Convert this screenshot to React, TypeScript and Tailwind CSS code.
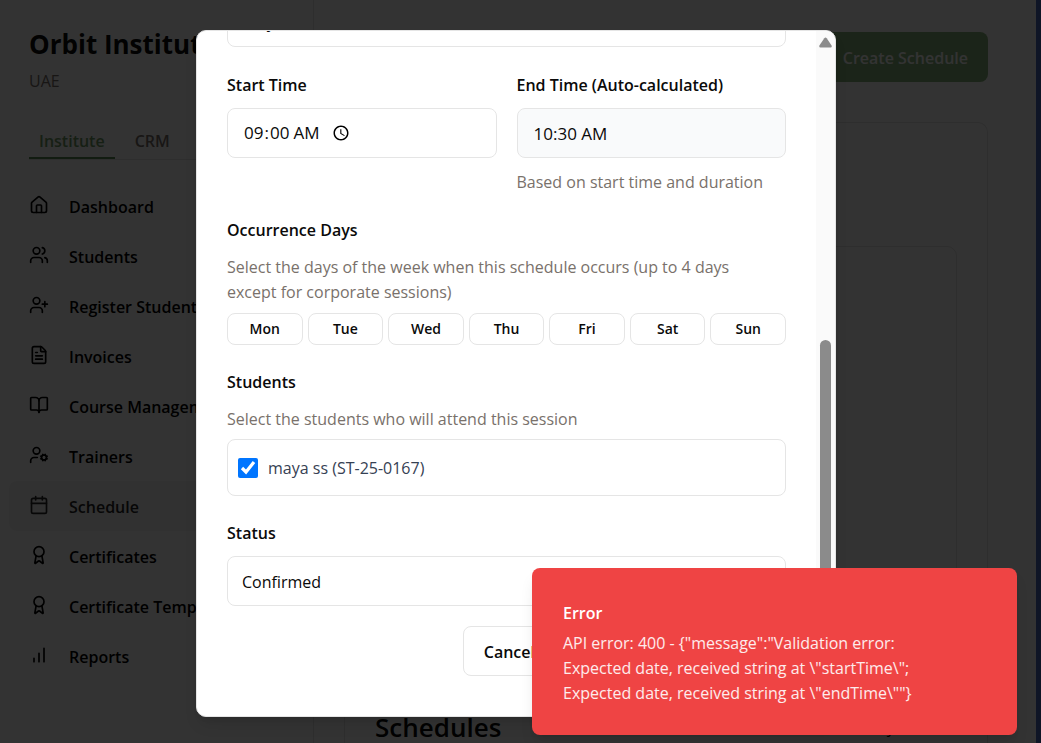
import React, { useState } from "react";
import {
  Award,
  BookOpen,
  Calendar,
  FileText,
  House,
  UserCog,
  UserPlus,
  Users,
} from "lucide-react";

function BarsIcon({ className }: { className?: string }) {
  return (
    <svg
      viewBox="0 0 24 24"
      fill="none"
      stroke="currentColor"
      strokeWidth={2}
      strokeLinecap="round"
      className={className}
      aria-hidden="true"
    >
      <path d="M6 20v-4M12 20V10M18 20V4" />
    </svg>
  );
}

const navItems = [
  { label: "Dashboard", icon: House },
  { label: "Students", icon: Users },
  { label: "Register Student", icon: UserPlus },
  { label: "Invoices", icon: FileText },
  { label: "Course Management", icon: BookOpen },
  { label: "Trainers", icon: UserCog },
  { label: "Schedule", icon: Calendar, active: true },
  { label: "Certificates", icon: Award },
  { label: "Certificate Templates", icon: Award },
  { label: "Reports", icon: BarsIcon },
];

const weekDays = ["Mon", "Tue", "Wed", "Thu", "Fri", "Sat", "Sun"];

function Sidebar() {
  return (
    <aside className="w-[314px] shrink-0 border-r border-neutral-200 px-[9px] pt-[26px]">
      <div className="px-5">
        <h1 className="text-[26px] leading-9 font-bold whitespace-nowrap">Orbit Institute</h1>
        <p className="mt-[6px] leading-[26px] text-stone-500">UAE</p>
        <div className="mt-[29px] flex border-b border-neutral-200 font-semibold">
          <button className="border-b-2 border-[#5c8a54] px-[10px] pt-[5px] pb-[2px] leading-[27px] text-[#6f9d66]">
            Institute
          </button>
          <button className="px-5 pt-[5px] pb-1 leading-[27px] text-stone-500">CRM</button>
        </div>
      </div>
      <nav className="mt-[21px]">
        {navItems.map(({ label, icon: Icon, active }) => (
          <a
            key={label}
            href="#"
            className={
              active
                ? "flex h-[50px] items-center gap-5 rounded-lg bg-neutral-100 px-5 pt-[2px] font-semibold whitespace-nowrap text-neutral-800"
                : "flex h-[50px] items-center gap-5 px-5 pt-[2px] font-semibold whitespace-nowrap text-black"
            }
          >
            <Icon className="mb-[5px] size-5 shrink-0" />
            {label}
          </a>
        ))}
      </nav>
    </aside>
  );
}

function SchedulePage() {
  return (
    <main className="flex min-w-0 flex-1 flex-col px-[30px] pt-8 pr-12">
      <button className="h-[50px] shrink-0 self-end rounded-lg bg-[#87b47d] px-5 pt-[2px] font-semibold text-white">
        Create Schedule
      </button>
      <section className="mt-10 flex-1 rounded-t-[10px] border border-b-0 border-neutral-200 px-[30px] pt-[123px]">
        <div className="h-[420px] rounded-[10px] border border-neutral-200" />
        <div className="mt-[43px] flex items-center justify-between">
          <h2 className="text-[26px] leading-9 font-semibold">Schedules</h2>
          <span className="pr-1">May 9, 2025</span>
        </div>
      </section>
    </main>
  );
}

function ScrollTrack() {
  return (
    <div className="flex w-[19px] shrink-0 flex-col items-center bg-neutral-50 py-[6px]" aria-hidden="true">
      <svg viewBox="0 0 13 11" className="h-[11px] w-[13px] fill-[#8b8b8b]">
        <path d="M5.3 1.2Q6.5 0 7.7 1.2L12.6 8.6Q13.2 10.6 11.5 10.6H1.5Q-.2 10.6.4 8.6Z" />
      </svg>
      <div className="mt-[292px] w-[11px] flex-1 rounded-full bg-[#8b8b8b]" />
      <svg viewBox="0 0 13 11" className="mt-1 h-[11px] w-[13px] rotate-180 fill-[#8b8b8b]">
        <path d="M5.3 1.2Q6.5 0 7.7 1.2L12.6 8.6Q13.2 10.6 11.5 10.6H1.5Q-.2 10.6.4 8.6Z" />
      </svg>
    </div>
  );
}

function ScheduleDialog() {
  const [days, setDays] = useState<string[]>([]);
  const toggle = (day: string) =>
    setDays((current) =>
      current.includes(day) ? current.filter((d) => d !== day) : [...current, day],
    );

  return (
    <div
      role="dialog"
      aria-label="Create schedule"
      className="flex h-full w-full max-w-[640px] overflow-hidden rounded-[10px] border border-neutral-200 bg-white shadow-lg"
    >
      <form className="flex min-w-0 flex-1 flex-col justify-end px-[30px] pb-10">
        <button
          type="button"
          className="h-[50px] shrink-0 rounded-lg border border-neutral-200 px-[14px] text-left text-[17px]"
        >
          May 21st, 2025
        </button>

        <div className="mt-[25px] grid grid-cols-2 gap-5">
          <div>
            <label htmlFor="start" className="block leading-[27px] font-semibold">
              Start Time
            </label>
            <input
              id="start"
              type="time"
              defaultValue="09:00"
              className="mt-[9px] flex h-[50px] w-full rounded-lg border border-neutral-200 px-[15px] text-[17px]"
            />
          </div>
          <div>
            <label htmlFor="end" className="block leading-[27px] font-semibold whitespace-nowrap">
              End Time (Auto-calculated)
            </label>
            <input
              id="end"
              readOnly
              value="10:30 AM"
              className="mt-[9px] h-[50px] w-full rounded-lg border border-neutral-200 bg-gray-50 px-4 text-[17px]"
            />
            <p className="mt-3 leading-[25px] whitespace-nowrap text-stone-500">
              Based on start time and duration
            </p>
          </div>
        </div>

        <fieldset className="mt-[22px]">
          <legend className="leading-[27px] font-semibold">Occurrence Days</legend>
          <p className="mt-[11px] pr-7 leading-[25px] text-stone-500">
            Select the days of the week when this schedule occurs (up to 4 days except for corporate
            sessions)
          </p>
          <div className="mt-2 grid grid-cols-7 gap-[5px]">
            {weekDays.map((day) => (
              <button
                key={day}
                type="button"
                aria-pressed={days.includes(day)}
                onClick={() => toggle(day)}
                className="h-8 rounded-lg border border-neutral-200 text-sm font-semibold aria-pressed:bg-neutral-100"
              >
                {day}
              </button>
            ))}
          </div>
        </fieldset>

        <fieldset className="mt-6">
          <legend className="leading-[27px] font-semibold">Students</legend>
          <p className="mt-[11px] leading-[25px] text-stone-500">
            Select the students who will attend this session
          </p>
          <div className="mt-[7px] flex h-[57px] items-center rounded-lg border border-neutral-200 px-[10px]">
            <label className="flex items-center gap-[10px] text-gray-700">
              <input type="checkbox" defaultChecked className="size-5" />
              maya ss (ST-25-0167)
            </label>
          </div>
        </fieldset>

        <div className="mt-6">
          <label htmlFor="status" className="block leading-[27px] font-semibold">
            Status
          </label>
          <select
            id="status"
            className="mt-[9px] h-[50px] w-full appearance-none rounded-lg border border-neutral-200 px-[14px] pt-[2px]"
          >
            <option>Confirmed</option>
          </select>
        </div>

        <div className="mt-5 flex justify-end gap-[10px]">
          <button
            type="button"
            className="h-[50px] rounded-lg border border-neutral-200 px-5 pt-[2px] font-semibold"
          >
            Cancel
          </button>
          <button
            type="submit"
            className="h-[50px] w-[220px] rounded-lg bg-[#87b47d] px-5 pt-[2px] font-semibold text-white"
          >
            Create Schedule
          </button>
        </div>
      </form>
      <ScrollTrack />
    </div>
  );
}

function ErrorToast() {
  return (
    <div
      role="alert"
      className="absolute right-[19px] bottom-2 w-[485px] rounded-lg bg-[#ef4444] px-[31px] pt-[33px] pb-[29px] leading-[25px] text-white shadow-lg"
    >
      <p className="font-semibold">Error</p>
      <p className="mt-[5px] pr-8 text-white/90">
        {'API error: 400 - {"message":"Validation error: Expected date, received string at \\"startTime\\"; Expected date, received string at \\"endTime\\""}'}
      </p>
    </div>
  );
}

export default function App() {
  return (
    <div className="flex h-screen overflow-hidden bg-[#0f1526] pr-[5px] font-['Open_Sans',sans-serif] text-base text-neutral-950">
      <div className="relative flex min-w-0 flex-1 overflow-hidden bg-white">
        <Sidebar />
        <SchedulePage />
        <div className="absolute inset-0 flex items-center justify-center bg-black/80 pt-[30px] pr-1 pb-[26px]">
          <ScheduleDialog />
        </div>
        <ErrorToast />
      </div>
    </div>
  );
}
